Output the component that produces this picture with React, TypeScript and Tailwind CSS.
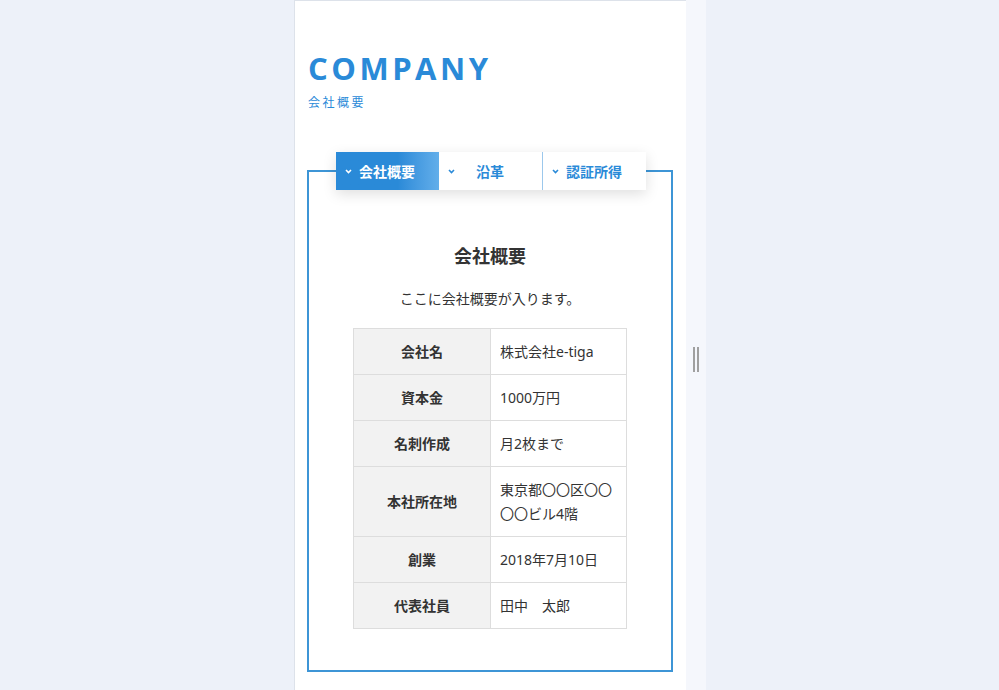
import React from 'react';

const tabs = [
  { label: '会社概要', active: true },
  { label: '沿革', active: false },
  { label: '認証所得', active: false },
];

const rows: { head: string; value: React.ReactNode; tall?: boolean }[] = [
  { head: '会社名', value: '株式会社e-tiga' },
  { head: '資本金', value: '1000万円' },
  { head: '名刺作成', value: '月2枚まで' },
  {
    head: '本社所在地',
    value: (
      <>
        東京都〇〇区〇〇
        <br />
        〇〇ビル4階
      </>
    ),
    tall: true,
  },
  { head: '創業', value: '2018年7月10日' },
  { head: '代表社員', value: '田中　太郎' },
];

function Chevron({ white }: { white: boolean }) {
  return (
    <svg width="7" height="5" viewBox="0 0 7 5" className="absolute left-[9px] top-[17px]">
      <polyline
        points="1,1 3.5,3.5 6,1"
        fill="none"
        stroke={white ? '#ffffff' : '#2a8ad8'}
        strokeWidth="1.6"
      />
    </svg>
  );
}

export default function App() {
  return (
    <div
      className="flex h-[690px] w-full overflow-hidden bg-[#edf1f9]"
      style={{ fontFamily: '"Noto Sans", "Noto Sans CJK JP", sans-serif' }}
    >
      <div className="w-[294px] shrink-0" />

      {/* Main panel */}
      <div className="w-[392px] shrink-0 border-l border-t border-[#dde2ea] bg-white">
        <div className="px-[13px] pt-[48px]">
          <h1
            className="text-[31px] leading-[38px] font-bold tracking-[3.5px] text-[#2a8ad8]"
            style={{ fontFamily: '"Open Sans", sans-serif' }}
          >
            COMPANY
          </h1>
          <p className="mt-[8px] text-[12px] leading-[16px] tracking-[2.5px] text-[#2a8ad8]">会社概要</p>
        </div>

        <div className="mt-[41px] ml-[12px] flex w-[366px] flex-col items-center">
          {/* Tabs */}
          <div className="relative z-10 ml-[1px] flex bg-white shadow-[0_4px_14px_rgba(0,0,0,0.13)]">
            {tabs.map((t, i) => (
              <div
                key={t.label}
                className={
                  t.active
                    ? 'relative flex h-[38px] w-[103px] items-center justify-center bg-gradient-to-r from-[#2a8ad8] from-60% to-[#62aeea] text-[14px] font-bold text-white'
                    : i === 2
                      ? 'relative flex h-[38px] w-[104px] items-center justify-center border-l border-[#9cc8ec] text-[14px] font-bold text-[#2a8ad8]'
                      : 'relative flex h-[38px] w-[103px] items-center justify-center text-[14px] font-bold text-[#2a8ad8]'
                }
              >
                <Chevron white={t.active} />
                {t.label}
              </div>
            ))}
          </div>

          {/* Content box */}
          <div className="-mt-[20px] w-[366px] border-2 border-[#3d95d6] px-[44px] pt-[71px] pb-[41px]">
            <h2 className="text-center text-[18px] leading-[26px] font-bold text-[#333]">会社概要</h2>
            <p className="mt-[20px] text-center text-[14px] leading-[20px] text-[#333]">ここに会社概要が入ります。</p>

            <table className="mt-[19px] w-full border-collapse text-[14px] text-[#333]">
              <tbody>
                {rows.map((r) => (
                  <tr key={r.head}>
                    <th
                      className={
                        r.tall
                          ? 'h-[70px] w-[137px] border border-[#dddddd] bg-[#f2f2f2] text-center font-bold'
                          : 'h-[46px] w-[137px] border border-[#dddddd] bg-[#f2f2f2] text-center font-bold'
                      }
                    >
                      {r.head}
                    </th>
                    <td className="border border-[#dddddd] pl-[9px] leading-[24px]">{r.value}</td>
                  </tr>
                ))}
              </tbody>
            </table>
          </div>
        </div>
      </div>

      {/* Resize strip */}
      <div className="w-[20px] shrink-0 bg-[#f5f7fc]">
        <div className="mt-[347px] ml-[7px] flex gap-[2px]">
          <div className="h-[25px] w-[2px] bg-[#a0a0a0]" />
          <div className="h-[25px] w-[2px] bg-[#a0a0a0]" />
        </div>
      </div>
    </div>
  );
}
